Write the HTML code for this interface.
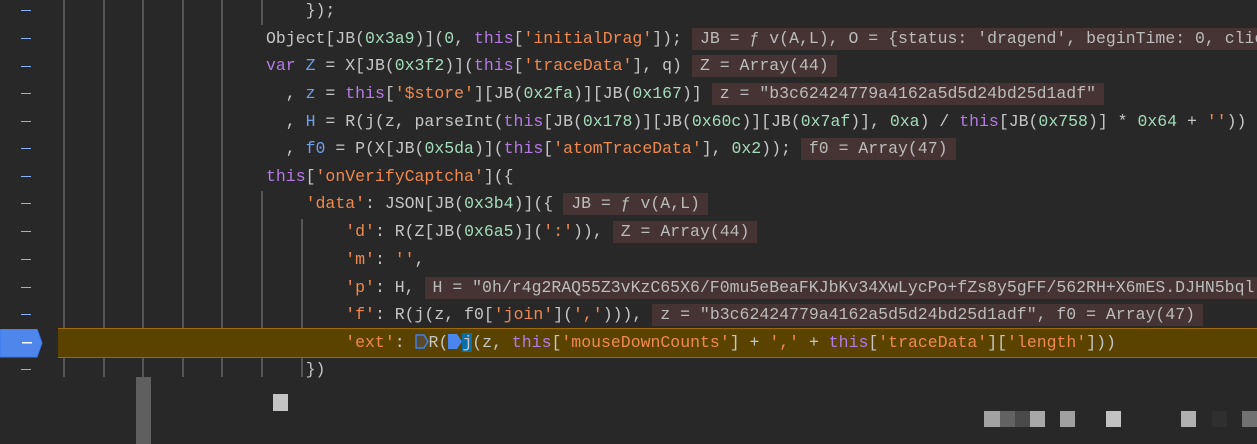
<!DOCTYPE html>
<html><head><meta charset="utf-8"><style>
html,body{margin:0;padding:0;background:#282828;width:1257px;height:444px;overflow:hidden;position:relative}
.ln{position:absolute;left:266px;height:27.6px;line-height:27.6px;white-space:pre;font-family:"Liberation Mono",monospace;font-size:16.5px;color:#c6c6c6;z-index:3;max-width:991px;overflow:hidden}
.k{color:#b57ae6}.v{color:#6fa0e8}.n{color:#a6dcbc}.s{color:#f0894f}
.b{background:#463334;padding:1px 8px 2px 8px;margin-left:10px;color:#bcbcbc}
.g{position:absolute;width:2px;background:#555;z-index:1}
.d{position:absolute;left:21px;width:10px;height:1px;background:#8ab4f8}
.sq{position:absolute}
</style></head><body>
<div class="g" style="left:63px;top:0;height:377px"></div>
<div class="g" style="left:103px;top:0;height:377px"></div>
<div class="g" style="left:142px;top:0;height:377px"></div>
<div class="g" style="left:182px;top:0;height:377px"></div>
<div class="g" style="left:221px;top:0;height:377px"></div>
<div class="g" style="left:261px;top:0;height:25px"></div>
<div class="g" style="left:261px;top:191px;height:186px"></div>
<div class="g" style="left:301px;top:219px;height:158px"></div>
<div style="position:absolute;left:58px;top:328px;width:1199px;height:28px;background:#5a4300;border-top:1px solid #9c6a00;border-bottom:1px solid #9c6a00;z-index:2"></div>
<div class="d" style="top:10px"></div><div class="d" style="top:38px"></div><div class="d" style="top:66px"></div>
<div class="d" style="top:93px"></div><div class="d" style="top:121px"></div><div class="d" style="top:148px"></div>
<div class="d" style="top:176px"></div><div class="d" style="top:203px"></div><div class="d" style="top:231px"></div>
<div class="d" style="top:259px"></div><div class="d" style="top:287px"></div><div class="d" style="top:314px"></div>
<div class="d" style="top:369px"></div>
<svg style="position:absolute;left:0;top:329px" width="44" height="29"><polygon points="0,0 37,0 42,14 37,28 0,28" fill="#4f86ec" stroke="#3a78f0" stroke-width="1"/><rect x="22" y="13" width="10" height="1.5" fill="#fff"/></svg>
<div class="ln" style="top:-3px">    });</div>
<div class="ln" style="top:25px">Object[JB(<span class="n">0x3a9</span>)](<span class="n">0</span>, <span class="k">this</span>[<span class="s">'initialDrag'</span>]);<span class="b">JB = ƒ v(A,L), O = {status: 'dragend', beginTime: 0, clientX: 0</span></div>
<div class="ln" style="top:52px"><span class="k">var</span> <span class="v">Z</span> = X[JB(<span class="n">0x3f2</span>)](<span class="k">this</span>[<span class="s">'traceData'</span>], q)<span class="b">Z = Array(44)</span></div>
<div class="ln" style="top:80px">  , <span class="v">z</span> = <span class="k">this</span>[<span class="s">'$store'</span>][JB(<span class="n">0x2fa</span>)][JB(<span class="n">0x167</span>)]<span class="b">z = "b3c62424779a4162a5d5d24bd25d1adf"</span></div>
<div class="ln" style="top:108px">  , <span class="v">H</span> = R(j(z, parseInt(<span class="k">this</span>[JB(<span class="n">0x178</span>)][JB(<span class="n">0x60c</span>)][JB(<span class="n">0x7af</span>)], <span class="n">0xa</span>) / <span class="k">this</span>[JB(<span class="n">0x758</span>)] * <span class="n">0x64</span> + <span class="s">''</span>))</div>
<div class="ln" style="top:135px">  , <span class="v">f0</span> = P(X[JB(<span class="n">0x5da</span>)](<span class="k">this</span>[<span class="s">'atomTraceData'</span>], <span class="n">0x2</span>));<span class="b">f0 = Array(47)</span></div>
<div class="ln" style="top:163px"><span class="k">this</span>[<span class="s">'onVerifyCaptcha'</span>]({</div>
<div class="ln" style="top:190px">    <span class="s">'data'</span>: JSON[JB(<span class="n">0x3b4</span>)]({<span class="b">JB = ƒ v(A,L)</span></div>
<div class="ln" style="top:218px">        <span class="s">'d'</span>: R(Z[JB(<span class="n">0x6a5</span>)](<span class="s">':'</span>)),<span class="b">Z = Array(44)</span></div>
<div class="ln" style="top:246px">        <span class="s">'m'</span>: <span class="s">''</span>,</div>
<div class="ln" style="top:274px">        <span class="s">'p'</span>: H,<span class="b">H = "0h/r4g2RAQ55Z3vKzC65X6/F0mu5eBeaFKJbKv34XwLycPo+fZs8y5gFF/562RH+X6mES.DJHN5bql</span></div>
<div class="ln" style="top:301px">        <span class="s">'f'</span>: R(j(z, f0[<span class="s">'join'</span>](<span class="s">','</span>))),<span class="b">z = "b3c62424779a4162a5d5d24bd25d1adf", f0 = Array(47)</span></div>
<div class="ln" style="top:329px">        <span class="s">'ext'</span>: <svg width="14" height="15" style="vertical-align:-2px"><polygon points="1,1 9,1 13,7.5 9,14 1,14" fill="#5a4a2a" stroke="#3a80f0" stroke-width="1.5"/></svg>R(<svg width="14" height="15" style="vertical-align:-2px"><polygon points="0,0 9,0 14,7.5 9,15 0,15" fill="#4a86ee"/></svg><span style="background:#0a6ea8">j</span>(z, <span class="k">this</span>[<span class="s">'mouseDownCounts'</span>] + <span class="s">','</span> + <span class="k">this</span>[<span class="s">'traceData'</span>][<span class="s">'length'</span>]))</div>
<div class="ln" style="top:356px">    })</div>
<div class="sq" style="left:136px;top:377px;width:15px;height:67px;background:#5f5f5f"></div>
<div class="sq" style="left:273px;top:394px;width:15px;height:17px;background:#c4c4c4"></div>
<div class="sq" style="left:984px;top:411px;width:16px;height:16px;background:#a2a2a2"></div>
<div class="sq" style="left:1000px;top:411px;width:15px;height:16px;background:#626262"></div>
<div class="sq" style="left:1015px;top:411px;width:15px;height:16px;background:#4a4a4a"></div>
<div class="sq" style="left:1030px;top:411px;width:15px;height:16px;background:#a8a8a8"></div>
<div class="sq" style="left:1060px;top:411px;width:15px;height:16px;background:#a0a0a0"></div>
<div class="sq" style="left:1106px;top:411px;width:15px;height:16px;background:#c2c2c2"></div>
<div class="sq" style="left:1181px;top:411px;width:15px;height:16px;background:#b0b0b0"></div>
<div class="sq" style="left:1212px;top:411px;width:15px;height:16px;background:#2f2f2f"></div>
<div class="sq" style="left:1242px;top:411px;width:15px;height:16px;background:#717171"></div>
</body></html>
